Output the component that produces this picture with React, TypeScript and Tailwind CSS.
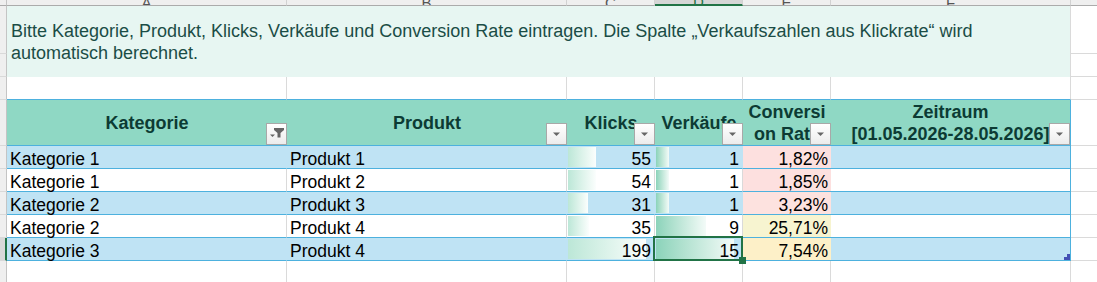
import React from 'react';

type Row = {
  kategorie: string;
  produkt: string;
  klicks: number;
  verkaeufe: number;
  rate: string;
  rateBg: string;
};

const rows: Row[] = [
  { kategorie: 'Kategorie 1', produkt: 'Produkt 1', klicks: 55, verkaeufe: 1, rate: '1,82%', rateBg: 'bg-[#fde0df]' },
  { kategorie: 'Kategorie 1', produkt: 'Produkt 2', klicks: 54, verkaeufe: 1, rate: '1,85%', rateBg: 'bg-[#fde0df]' },
  { kategorie: 'Kategorie 2', produkt: 'Produkt 3', klicks: 31, verkaeufe: 1, rate: '3,23%', rateBg: 'bg-[#fde2df]' },
  { kategorie: 'Kategorie 2', produkt: 'Produkt 4', klicks: 35, verkaeufe: 9, rate: '25,71%', rateBg: 'bg-[#f7f4d0]' },
  { kategorie: 'Kategorie 3', produkt: 'Produkt 4', klicks: 199, verkaeufe: 15, rate: '7,54%', rateBg: 'bg-[#fdf0c8]' },
];

const maxKlicks = Math.max(...rows.map(r => r.klicks));
const maxVerkaeufe = Math.max(...rows.map(r => r.verkaeufe));

// Excel data bars: 10% minimum, 90% maximum of the cell width
const barWidth = (value: number, max: number) => Math.round(87 * (0.1 + (0.8 * value) / max));

const colWidths = ['w-[280px]', 'w-[280px]', 'w-[88px]', 'w-[88px]', 'w-[88px]', 'w-[240px]'];
const letters = ['A', 'B', 'C', 'D', 'E', 'F'];

function FilterButton({ filtered }: { filtered?: boolean }) {
  return (
    <div className="absolute right-0 bottom-0 w-[21px] h-[22px] border border-[#a8a8a8] bg-linear-to-b from-white to-[#ececec]">
      <svg width="19" height="20" viewBox="0 0 19 20">
        {filtered ? (
          <>
            <path d="M7 4h10v2l-3.5 3v4.5h-3V9L7 6z" fill="#656565" />
            <path d="M3 10.5h5l-2.5 2.5z" fill="#656565" />
          </>
        ) : (
          <path d="M6 8.5h7l-3.5 3.5z" fill="#666666" />
        )}
      </svg>
    </div>
  );
}

function TopStrip() {
  return (
    <div className="flex h-[6px] shrink-0">
      <div className="w-[7px] shrink-0 bg-[#efefef] border-r border-b border-r-[#c4c4c4] border-b-[#ababab]" />
      {colWidths.map((w, i) => (
        <div
          key={i}
          className={`${w} shrink-0 flex justify-center items-end overflow-hidden border-r border-r-[#d2d2d2] ${
            i === 3 ? 'bg-[#d6d6d6] border-b-2 border-b-[#217346] text-[#217346]' : 'bg-[#efefef] border-b border-b-[#ababab] text-[#555555]'
          }`}
        >
          <span className="text-[15px] leading-[15px] mb-[-5px]">{letters[i]}</span>
        </div>
      ))}
      <div className="flex-1 bg-[#efefef] border-b border-b-[#ababab]" />
    </div>
  );
}

function RowHeader() {
  const heights = ['h-[48px]', 'h-[23px]', 'h-[23px]', 'h-[46px]', 'h-[23px]', 'h-[23px]', 'h-[23px]', 'h-[23px]'];
  return (
    <div className="flex flex-col w-[7px] shrink-0">
      {heights.map((h, i) => (
        <div key={i} className={`${h} shrink-0 bg-[#efefef] border-r border-b border-r-[#c4c4c4] border-b-[#d9d9d9]`} />
      ))}
      <div className="h-[23px] shrink-0 bg-[#d9d9d9] border-r-2 border-b border-r-[#217346] border-b-[#d9d9d9]" />
      <div className="flex-1 bg-[#efefef] border-r border-r-[#c4c4c4]" />
    </div>
  );
}

export default function App() {
  return (
    <div className="w-[1097px] h-[282px] overflow-hidden bg-white flex flex-col font-['Liberation_Sans',Arial,sans-serif] text-[17.5px]">
      <TopStrip />
      <div className="flex flex-1">
        <RowHeader />
        <div className="flex flex-col w-[1090px]">
          {/* Hinweistext */}
          <div className="flex h-[71px] shrink-0">
            <div className="w-[1064px] shrink-0 bg-[#e7f6f2] border-r border-r-[#dadada] flex items-center pl-[4px] text-[#1b4d46] text-[18px] leading-[22px]">
              <p>
                Bitte Kategorie, Produkt, Klicks, Verkäufe und Conversion Rate eintragen. Die Spalte „Verkaufszahlen aus Klickrate“ wird
                <br />
                automatisch berechnet.
              </p>
            </div>
            <div className="flex-1 flex flex-col">
              <div className="h-[48px] border-b border-b-[#dadada]" />
              <div className="h-[23px] border-b border-b-[#dadada]" />
            </div>
          </div>

          {/* Leerzeile */}
          <div className="flex h-[23px] shrink-0">
            {colWidths.map((w, i) => (
              <div key={i} className={`${w} shrink-0 border-r border-b border-r-[#dadada] border-b-[#4db1de]`} />
            ))}
            <div className="flex-1 border-b border-b-[#dadada]" />
          </div>

          {/* Kopfzeile */}
          <div className="flex h-[46px] shrink-0 font-bold text-[#0c3b34] text-[18px] leading-[22px]">
            <div className="relative w-[280px] shrink-0 bg-[#8fd8c4] border-b border-b-[#4db1de] flex items-center justify-center">
              Kategorie
              <FilterButton filtered />
            </div>
            <div className="relative w-[280px] shrink-0 bg-[#8fd8c4] border-b border-b-[#4db1de] flex items-center justify-center">
              Produkt
              <FilterButton />
            </div>
            <div className="relative w-[88px] shrink-0 bg-[#8fd8c4] border-b border-b-[#4db1de] flex items-center justify-center">
              Klicks
              <FilterButton />
            </div>
            <div className="relative w-[88px] shrink-0 bg-[#8fd8c4] border-b border-b-[#4db1de] flex items-center justify-center whitespace-nowrap overflow-hidden">
              Verkäufe
              <FilterButton />
            </div>
            <div className="relative w-[88px] shrink-0 bg-[#8fd8c4] border-b border-b-[#4db1de] flex flex-col items-center justify-center text-center whitespace-nowrap">
              <span>Conversi</span>
              <span>on Rate</span>
              <FilterButton />
            </div>
            <div className="relative w-[240px] shrink-0 bg-[#8fd8c4] border-b border-r border-b-[#4db1de] border-r-[#4db1de] flex flex-col items-center justify-center text-center whitespace-nowrap">
              <span>Zeitraum</span>
              <span>[01.05.2026-28.05.2026]</span>
              <FilterButton />
            </div>
            <div className="flex-1 border-b border-b-[#dadada]" />
          </div>

          {/* Datenzeilen */}
          {rows.map((row, i) => {
            const banded = i % 2 === 0;
            const bg = banded ? 'bg-[#bfe3f4]' : 'bg-white';
            const grid = banded ? 'border-r-[#bfe3f4]' : 'border-r-[#dadada]';
            const isLast = i === rows.length - 1;
            return (
              <div key={i} className="flex h-[23px] shrink-0 leading-[18px] text-black">
                <div className={`w-[280px] shrink-0 ${bg} border-r border-b ${grid} border-b-[#4db1de] flex items-end pl-[3px]`}>
                  {row.kategorie}
                </div>
                <div className={`w-[280px] shrink-0 ${bg} border-r border-b ${grid} border-b-[#4db1de] flex items-end pl-[3px]`}>
                  {row.produkt}
                </div>
                <div
                  className={`w-[88px] shrink-0 ${bg} border-r border-b ${grid} border-b-[#4db1de] flex items-end justify-end pr-[3px] bg-no-repeat bg-[position:1px_1px] bg-linear-to-r from-[#bce7d7] to-[#fbfefd]`}
                  style={{ backgroundSize: `${barWidth(row.klicks, maxKlicks)}px 20px` }}
                >
                  {row.klicks}
                </div>
                <div
                  className={`relative w-[88px] shrink-0 ${bg} border-r border-b ${grid} border-b-[#4db1de] flex items-end justify-end pr-[3px] bg-no-repeat bg-[position:1px_1px] bg-linear-to-r from-[#8bd3ba] to-[#f3fbf8]`}
                  style={{ backgroundSize: `${barWidth(row.verkaeufe, maxVerkaeufe)}px 20px` }}
                >
                  {row.verkaeufe}
                  {isLast && (
                    <>
                      <div className="absolute -left-[2px] -top-[2px] -right-[1px] -bottom-[1px] border-2 border-[#217346]" />
                      <div className="absolute -right-[4px] -bottom-[4px] w-[7px] h-[7px] bg-[#217346]" />
                    </>
                  )}
                </div>
                <div className={`w-[88px] shrink-0 ${row.rateBg} border-b border-b-[#4db1de] flex items-end justify-end pr-[3px]`}>
                  {row.rate}
                </div>
                <div className={`relative w-[240px] shrink-0 ${bg} border-r border-b border-r-[#4db1de] border-b-[#4db1de]`}>
                  {isLast && (
                    <svg className="absolute right-0 bottom-0" width="6" height="6" viewBox="0 0 6 6">
                      <path d="M3 0h3v6H0V3h3z" fill="#4350b4" />
                    </svg>
                  )}
                </div>
                <div className="flex-1 border-b border-b-[#dadada]" />
              </div>
            );
          })}

          {/* Rest des Blatts */}
          <div className="flex flex-1">
            {colWidths.map((w, i) => (
              <div key={i} className={`${w} shrink-0 border-r border-r-[#dadada]`} />
            ))}
            <div className="flex-1" />
          </div>
        </div>
      </div>
    </div>
  );
}
